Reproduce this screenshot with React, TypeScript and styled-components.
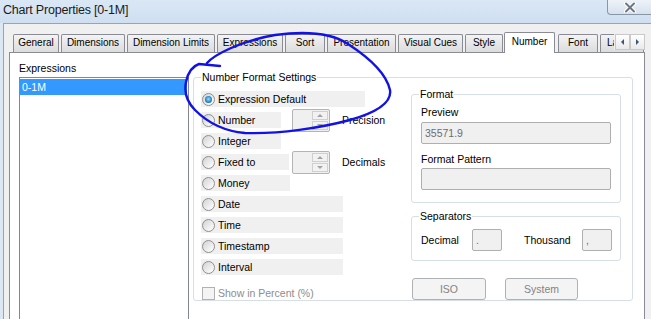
import React from "react";
import styled, { createGlobalStyle, css } from "styled-components";

const Global = createGlobalStyle`
  html, body { margin: 0; padding: 0; background: #fff; }
  body { font-family: "Liberation Sans", Arial, sans-serif; font-size: 10.5px; color: #000; }
  * { box-sizing: border-box; }
`;

const Window = styled.div`
  position: relative;
  width: 651px;
  height: 319px;
  overflow: hidden;
  background: #dce7f4;
  display: flex;
  flex-direction: column;
`;

const TitleBar = styled.div`
  flex: none;
  height: 23px;
  display: flex;
  align-items: flex-start;
  background: linear-gradient(#dae7f5, #cfdff1);
`;

const Title = styled.div`
  font-size: 12.5px;
  letter-spacing: -0.2px;
  line-height: 21px;
  padding-left: 3px;
  color: #1b1b1b;
`;

const CloseBtn = styled.div`
  margin-left: auto;
  flex: none;
  width: 48px;
  height: 15px;
  margin-right: -4px;
  border: 1px solid #8996a6;
  border-top: none;
  border-radius: 0 0 0 4px;
  background: linear-gradient(#eef3f9, #d6e1ee);
  display: flex;
  align-items: center;
  justify-content: center;
  padding-right: 2px;
`;

const Body = styled.div`
  flex: 1;
  margin-left: 3px;
  background: #f0f0f0;
  border-left: 1px solid #97a4b4;
  border-top: 1px solid #97a4b4;
  padding: 8px 0 0 5px;
  display: flex;
  flex-direction: column;
`;

const TabStrip = styled.div`
  position: relative;
  z-index: 1;
  flex: none;
  width: 636px;
  height: 21px;
  margin-bottom: -1px;
  padding-left: 4px;
  display: flex;
  align-items: flex-end;
  gap: 2px;
  overflow: hidden;
`;

const Tab = styled.div<{ $w: number; $active?: boolean }>`
  flex: none;
  width: ${(p) => p.$w}px;
  height: 18px;
  margin-bottom: 1px;
  border: 1px solid #898c95;
  border-bottom: none;
  border-radius: 2px 2px 0 0;
  background: linear-gradient(#f4f4f4, #e6e6e6 55%, #dcdcdc);
  font-size: 10px;
  line-height: 16px;
  text-align: center;
  white-space: nowrap;
  overflow: hidden;
  color: #000;
  ${(p) =>
    p.$active &&
    css`
      height: 21px;
      margin-bottom: 0;
      margin-left: -1px;
      margin-right: 1px;
      background: #fff;
      line-height: 18px;
    `}
`;

const TabScroller = styled.div`
  position: absolute;
  left: 605px;
  top: 2px;
  display: flex;
  gap: 0;
  background: #f0f0f0;
  padding-left: 1px;
`;

const ScrollBtn = styled.div<{ $dir: "left" | "right" }>`
  width: 15px;
  height: 16px;
  border: 1px solid #c9c9c9;
  background: linear-gradient(#ffffff, #eaeaea);
  display: flex;
  align-items: center;
  justify-content: center;
  &::after {
    content: "";
    width: 0;
    height: 0;
    border-top: 3px solid transparent;
    border-bottom: 3px solid transparent;
    ${(p) =>
      p.$dir === "left"
        ? css`border-right: 3px solid #3b5478;`
        : css`border-left: 3px solid #3b5478;`}
  }
`;

const Panel = styled.div`
  flex: 1;
  width: 636px;
  background: #fff;
  border: 1px solid #898c95;
  padding: 9px 0 0 9px;
  display: flex;
  align-items: flex-start;
`;

const LeftCol = styled.div`
  flex: none;
  width: 170px;
  display: flex;
  flex-direction: column;
`;

const FieldLabel = styled.div<{ $mt?: number }>`
  line-height: 12px;
  margin-top: ${(p) => p.$mt ?? 0}px;
  white-space: nowrap;
`;

const ListBox = styled.div`
  margin-top: 3px;
  height: 300px;
  border: 1px solid #828790;
  padding: 1px 1px 0 0;
`;

const ListItem = styled.div<{ $selected?: boolean }>`
  height: 16px;
  line-height: 16px;
  padding-left: 2px;
  ${(p) =>
    p.$selected &&
    css`
      background: #3399ff;
      color: #fff;
    `}
`;

const Group = styled.fieldset<{ $w: number; $ml?: number; $mt?: number; $pb?: number; $pl?: number; $pr?: number }>`
  flex: none;
  width: ${(p) => p.$w}px;
  margin: ${(p) => p.$mt ?? 0}px 0 0 ${(p) => p.$ml ?? 0}px;
  padding: 0 ${(p) => p.$pr ?? 9}px ${(p) => p.$pb ?? 0}px ${(p) => p.$pl ?? 9}px;
  border: 1px solid #d5dfe5;
  border-radius: 3px;
  min-width: 0;
`;

const Legend = styled.legend<{ $ml?: number }>`
  line-height: 13px;
  padding: 0 1px;
  margin-left: ${(p) => p.$ml ?? 0}px;
  white-space: nowrap;
`;

const GroupInner = styled.div`
  display: flex;
  align-items: flex-start;
`;

const OptionsCol = styled.div`
  flex: none;
  width: 210px;
  padding-top: 7px;
  display: flex;
  flex-direction: column;
  gap: 5px;
`;

const OptionRow = styled.div`
  height: 16px;
  display: flex;
  align-items: center;
`;

const OptionBar = styled.div<{ $w: number }>`
  flex: none;
  width: ${(p) => p.$w}px;
  height: 16px;
  background: #f0f0f0;
  display: flex;
  align-items: center;
  padding-left: 1px;
  gap: 3px;
  white-space: nowrap;
`;

const Radio = styled.span<{ $checked?: boolean }>`
  flex: none;
  width: 13px;
  height: 13px;
  border-radius: 50%;
  border: 1px solid #8e8f8f;
  background: linear-gradient(135deg, #d2d2d2, #f8f8f8 80%);
  display: flex;
  align-items: center;
  justify-content: center;
  ${(p) =>
    p.$checked &&
    css`
      &::after {
        content: "";
        width: 7px;
        height: 7px;
        border-radius: 50%;
        background: radial-gradient(circle at 50% 45%, #a4dcfa 0, #3b9ad8 45%, #123f6d 100%);
      }
    `}
`;

const Spin = styled.div<{ $ml: number }>`
  flex: none;
  margin-left: ${(p) => p.$ml}px;
  width: 38px;
  height: 23px;
  border: 1px solid #b4b4b4;
  border-radius: 2px;
  background: #f0f0f0;
  display: flex;
  justify-content: flex-end;
  padding: 1px;
`;

const SpinButtons = styled.div`
  width: 16px;
  display: flex;
  flex-direction: column;
  gap: 1px;
`;

const SpinBtn = styled.div<{ $dir: "up" | "down" }>`
  flex: 1;
  border: 1px solid #cfcfcf;
  background: #f2f2f2;
  display: flex;
  align-items: center;
  justify-content: center;
  &::after {
    content: "";
    width: 0;
    height: 0;
    border-left: 3px solid transparent;
    border-right: 3px solid transparent;
    ${(p) =>
      p.$dir === "up"
        ? css`border-bottom: 3px solid #a3a3a3;`
        : css`border-top: 3px solid #a3a3a3;`}
  }
`;

const SideText = styled.span`
  margin-left: 12px;
  white-space: nowrap;
`;

const CheckRow = styled.div`
  margin-top: 6px;
  height: 14px;
  display: flex;
  align-items: center;
  gap: 3px;
  padding-left: 1px;
  color: #8d8d8d;
  white-space: nowrap;
`;

const CheckBox = styled.span`
  flex: none;
  width: 13px;
  height: 13px;
  border: 1px solid #b1b1b1;
  background: #f4f4f4;
`;

const RightCol = styled.div`
  flex: none;
  width: 210px;
  margin-top: 4px;
  display: flex;
  flex-direction: column;
`;

const TextField = styled.div<{ $w?: number; $mt?: number }>`
  flex: none;
  width: ${(p) => (p.$w ? `${p.$w}px` : "100%")};
  height: 22px;
  margin-top: ${(p) => p.$mt ?? 0}px;
  border: 1px solid #afafaf;
  border-radius: 2px;
  background: #f0f0f0;
  color: #6d6d6d;
  line-height: 20px;
  padding-left: 3px;
  white-space: nowrap;
`;

const SepRow = styled.div`
  margin-top: 6px;
  display: flex;
  align-items: center;
`;

const SepLabel = styled.span<{ $w: number; $ml?: number }>`
  flex: none;
  width: ${(p) => p.$w}px;
  margin-left: ${(p) => p.$ml ?? 0}px;
  white-space: nowrap;
`;

const ButtonRow = styled.div`
  margin-top: 17px;
  display: flex;
  padding-left: 1px;
  gap: 19px;
`;

const Button = styled.div<{ $w: number }>`
  width: ${(p) => p.$w}px;
  height: 22px;
  border: 1px solid #adb2b5;
  border-radius: 3px;
  background: #f4f4f4;
  color: #838383;
  text-align: center;
  line-height: 20px;
`;

const Annotation = styled.svg`
  position: absolute;
  left: 0;
  top: 0;
  pointer-events: none;
  z-index: 5;
`;

const tabs: { label: string; w: number; active?: boolean }[] = [
  { label: "General", w: 46 },
  { label: "Dimensions", w: 64 },
  { label: "Dimension Limits", w: 88 },
  { label: "Expressions", w: 66 },
  { label: "Sort", w: 40 },
  { label: "Presentation", w: 69 },
  { label: "Visual Cues", w: 65 },
  { label: "Style", w: 38 },
  { label: "Number", w: 51, active: true },
  { label: "Font", w: 40 },
  { label: "Layout", w: 44 },
];

type Opt = { label: string; w: number; checked?: boolean; spin?: { ml: number; text: string } };

const options: Opt[] = [
  { label: "Expression Default", w: 164, checked: true },
  { label: "Number", w: 80, spin: { ml: 11, text: "Precision" } },
  { label: "Integer", w: 80 },
  { label: "Fixed to", w: 88, spin: { ml: 3, text: "Decimals" } },
  { label: "Money", w: 89 },
  { label: "Date", w: 142 },
  { label: "Time", w: 142 },
  { label: "Timestamp", w: 142 },
  { label: "Interval", w: 142 },
];

export default function App() {
  return (
    <>
      <Global />
      <Window>
        <TitleBar>
          <Title>Chart Properties [0-1M]</Title>
          <CloseBtn>
            <svg width="14" height="11" viewBox="0 0 14 11">
              <path d="M3 1.5 L11 9.5 M11 1.5 L3 9.5" stroke="#ffffff" strokeWidth="4" strokeLinecap="round" />
              <path d="M3 1.5 L11 9.5 M11 1.5 L3 9.5" stroke="#6d7685" strokeWidth="2" strokeLinecap="round" />
            </svg>
          </CloseBtn>
        </TitleBar>
        <Body>
          <TabStrip>
            {tabs.map((t) => (
              <Tab key={t.label} $w={t.w} $active={t.active}>
                {t.label}
              </Tab>
            ))}
            <TabScroller>
              <ScrollBtn $dir="left" />
              <ScrollBtn $dir="right" />
            </TabScroller>
          </TabStrip>
          <Panel>
            <LeftCol>
              <FieldLabel>Expressions</FieldLabel>
              <ListBox>
                <ListItem $selected>0-1M</ListItem>
              </ListBox>
            </LeftCol>
            <Group $w={440} $ml={4} $mt={9} $pl={7} $pr={10}>
              <Legend>Number Format Settings</Legend>
              <GroupInner>
                <OptionsCol>
                  {options.map((o) => (
                    <OptionRow key={o.label}>
                      <OptionBar $w={o.w}>
                        <Radio $checked={o.checked} />
                        {o.label}
                      </OptionBar>
                      {o.spin && (
                        <>
                          <Spin $ml={o.spin.ml}>
                            <SpinButtons>
                              <SpinBtn $dir="up" />
                              <SpinBtn $dir="down" />
                            </SpinButtons>
                          </Spin>
                          <SideText>{o.spin.text}</SideText>
                        </>
                      )}
                    </OptionRow>
                  ))}
                  <CheckRow>
                    <CheckBox />
                    Show in Percent (%)
                  </CheckRow>
                </OptionsCol>
                <RightCol>
                  <Group $w={210} $pb={12}>
                    <Legend $ml={-2}>Format</Legend>
                    <FieldLabel $mt={5}>Preview</FieldLabel>
                    <TextField $mt={4}>35571.9</TextField>
                    <FieldLabel $mt={9}>Format Pattern</FieldLabel>
                    <TextField $mt={3} />
                  </Group>
                  <Group $w={210} $mt={7} $pb={9}>
                    <Legend $ml={-2}>Separators</Legend>
                    <SepRow>
                      <SepLabel $w={51}>Decimal</SepLabel>
                      <TextField $w={30}>.</TextField>
                      <SepLabel $w={58} $ml={22}>Thousand</SepLabel>
                      <TextField $w={30}>,</TextField>
                    </SepRow>
                  </Group>
                  <ButtonRow>
                    <Button $w={74}>ISO</Button>
                    <Button $w={73}>System</Button>
                  </ButtonRow>
                </RightCol>
              </GroupInner>
            </Group>
          </Panel>
        </Body>
        <Annotation width="651" height="319" viewBox="0 0 651 319">
          <path
            d="M207 63 C214 55, 240 41, 275 35 C305 31, 330 32, 348 44 C368 57, 386 72, 390 90 C392 102, 378 112, 350 120 C320 128, 280 134, 245 133 C222 131, 205 120, 195 110 C187 102, 184 92, 186 82 C188 72, 193 66, 199 64 L220 66"
            fill="none"
            stroke="#1212e6"
            strokeWidth="2.4"
            strokeLinecap="round"
            strokeLinejoin="round"
          />
        </Annotation>
      </Window>
    </>
  );
}
